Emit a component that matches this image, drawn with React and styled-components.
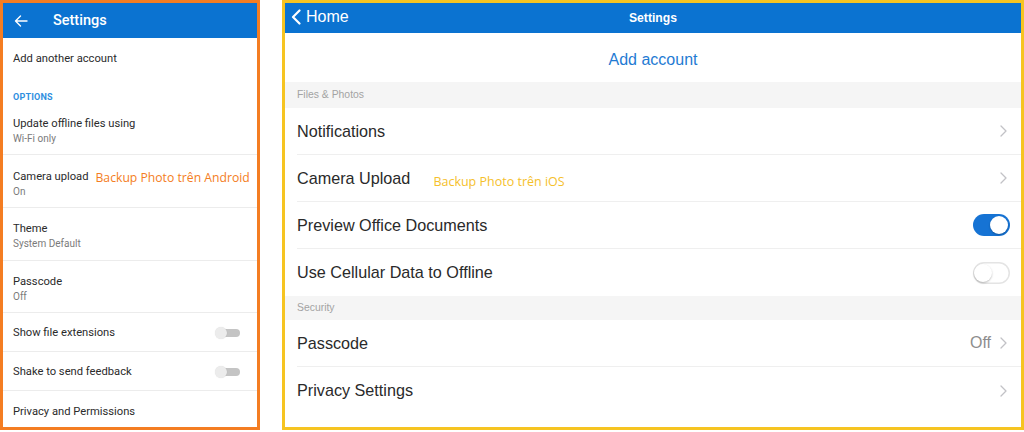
import React from "react";
import styled, { createGlobalStyle } from "styled-components";

const Global = createGlobalStyle`
  html, body { margin: 0; padding: 0; background: #fff; }
  * { box-sizing: border-box; }
`;

const Page = styled.div`
  width: 1024px;
  height: 432px;
  display: flex;
  align-items: flex-start;
  background: #fff;
  overflow: hidden;
`;

/* ---------- Android ---------- */
const AndroidPanel = styled.div`
  width: 260px;
  height: 430px;
  border: 3px solid #f47d22;
  display: flex;
  flex-direction: column;
  overflow: hidden;
  font-family: Roboto, "Noto Sans", sans-serif;
  background: #fff;
`;

const AndroidBar = styled.div`
  height: 35px;
  flex: none;
  background: #0b73d1;
  display: flex;
  align-items: center;
  padding-left: 11px;
  gap: 25px;
  color: #fff;
`;

const AndroidTitle = styled.div`
  font-size: 14.5px;
  font-weight: 500;
`;

const ARow = styled.div`
  flex: none;
  height: ${(p) => p.$h}px;
  padding: 0 17px 0 10px;
  display: flex;
  align-items: ${(p) => (p.$top ? "flex-start" : "center")};
  justify-content: space-between;
  padding-top: ${(p) => (p.$top ? "14px" : "2px")};
  border-bottom: ${(p) => (p.$line ? "1px solid #ececec" : "none")};
`;

const ATexts = styled.div`
  display: flex;
  flex-direction: column;
`;

const ATitleLine = styled.div`
  display: flex;
  align-items: baseline;
  white-space: nowrap;
  font-size: 11.2px;
  line-height: 14px;
  color: #2b2b2b;
`;

const ASub = styled.div`
  font-size: 10px;
  line-height: 12px;
  margin-top: 2px;
  color: #7a7a7a;
`;

const ASection = styled.div`
  flex: none;
  height: 25px;
  padding: 13px 10px 0;
  font-size: 9px;
  line-height: 12px;
  font-weight: 700;
  color: #2f8fe0;
  letter-spacing: 0.2px;
`;

const Note = styled.span`
  font-family: "Open Sans", "Noto Sans", sans-serif;
  font-size: ${(p) => p.$size}px;
  color: ${(p) => p.$color};
  margin-left: ${(p) => p.$gap}px;
  white-space: nowrap;
  position: relative;
  top: ${(p) => p.$drop}px;
`;

const ASwitch = styled.div`
  position: relative;
  width: 25px;
  height: 12px;
  &::before {
    content: "";
    position: absolute;
    left: 5px;
    right: 0;
    top: 2px;
    height: 8px;
    border-radius: 4px;
    background: #c4c4c4;
  }
  &::after {
    content: "";
    position: absolute;
    left: 0;
    top: 0;
    width: 12px;
    height: 12px;
    border-radius: 50%;
    background: #ececec;
    box-shadow: 0 0 1px rgba(0, 0, 0, 0.15);
  }
`;

/* ---------- iOS ---------- */
const IosPanel = styled.div`
  margin-left: 22px;
  width: 742px;
  height: 430px;
  border: 3px solid #f6c421;
  display: flex;
  flex-direction: column;
  overflow: hidden;
  font-family: "Liberation Sans", Arial, sans-serif;
  background: #fff;
`;

const IosBar = styled.div`
  flex: none;
  height: 30px;
  background: #0b73d1;
  color: #fff;
  display: grid;
  grid-template-columns: 1fr auto 1fr;
  align-items: center;
  padding: 0 6px;
`;

const BackLink = styled.div`
  display: flex;
  align-items: center;
  gap: 5px;
  font-size: 16px;
  padding-bottom: 2px;
`;

const IosTitle = styled.div`
  font-size: 12.2px;
  font-weight: 700;
  padding-bottom: 1px;
`;

const AddAccount = styled.div`
  flex: none;
  height: 49px;
  display: flex;
  align-items: center;
  justify-content: center;
  font-size: 16px;
  color: #1f7bd3;
  padding-top: 5px;
`;

const IosSection = styled.div`
  flex: none;
  height: ${(p) => p.$h}px;
  background: #f5f5f5;
  display: flex;
  align-items: center;
  padding-left: 12px;
  padding-bottom: 1px;
  font-size: 10.4px;
  color: #a3a3a3;
`;

const IRow = styled.div`
  flex: none;
  height: 47px;
  margin-left: 12px;
  padding-right: 11px;
  display: flex;
  align-items: center;
  justify-content: space-between;
  border-bottom: ${(p) => (p.$line ? "1px solid #efefef" : "none")};
`;

const ITitle = styled.div`
  display: flex;
  align-items: baseline;
  white-space: nowrap;
  font-size: 16.2px;
  color: #2a2a2a;
`;

const Trail = styled.div`
  display: flex;
  align-items: center;
  gap: 9px;
  font-size: 16px;
  color: #8d8d8d;
  padding-right: 3px;
`;

const ISwitch = styled.div`
  position: relative;
  width: 37px;
  height: 22px;
  border-radius: 11px;
  background: ${(p) => (p.$on ? "#1673d4" : "#fff")};
  box-shadow: ${(p) => (p.$on ? "none" : "inset 0 0 0 1.5px #e4e4e4")};
  &::after {
    content: "";
    position: absolute;
    top: 2px;
    left: ${(p) => (p.$on ? "17px" : "1px")};
    width: 18px;
    height: 18px;
    border-radius: 50%;
    background: #fff;
    box-shadow: 0 1px 2px rgba(0, 0, 0, 0.25);
  }
`;

const Chevron = () => (
  <svg width="7" height="12" viewBox="0 0 7 12" fill="none">
    <path d="M1 1l5 5-5 5" stroke="#c2c2c6" strokeWidth="1.3" strokeLinecap="round" strokeLinejoin="round" />
  </svg>
);

const BackArrow = () => (
  <svg width="14" height="12" viewBox="0 0 14 12" fill="none">
    <path d="M13 6H1.5M6.5 1L1.5 6l5 5" stroke="#fff" strokeWidth="1.4" strokeLinecap="round" strokeLinejoin="round" />
  </svg>
);

const BackChevron = () => (
  <svg width="10" height="16" viewBox="0 0 10 16" fill="none">
    <path d="M8.5 1.5L2 8l6.5 6.5" stroke="#fff" strokeWidth="2.2" strokeLinecap="round" strokeLinejoin="round" />
  </svg>
);

export default function App() {
  return (
    <>
      <Global />
      <Page>
        <AndroidPanel>
          <AndroidBar>
            <BackArrow />
            <AndroidTitle>Settings</AndroidTitle>
          </AndroidBar>
          <ARow $h={40}>
            <ATitleLine>Add another account</ATitleLine>
          </ARow>
          <ASection>OPTIONS</ASection>
          <ARow $h={52} $top $line>
            <ATexts>
              <ATitleLine>Update offline files using</ATitleLine>
              <ASub>Wi-Fi only</ASub>
            </ATexts>
          </ARow>
          <ARow $h={53} $top $line>
            <ATexts>
              <ATitleLine>
                Camera upload
                <Note $size={12.2} $color="#f47d22" $gap={7} $drop={2}>
                  Backup Photo trên Android
                </Note>
              </ATitleLine>
              <ASub>On</ASub>
            </ATexts>
          </ARow>
          <ARow $h={53} $top $line>
            <ATexts>
              <ATitleLine>Theme</ATitleLine>
              <ASub>System Default</ASub>
            </ATexts>
          </ARow>
          <ARow $h={52} $top $line>
            <ATexts>
              <ATitleLine>Passcode</ATitleLine>
              <ASub>Off</ASub>
            </ATexts>
          </ARow>
          <ARow $h={39} $line>
            <ATitleLine>Show file extensions</ATitleLine>
            <ASwitch />
          </ARow>
          <ARow $h={39} $line>
            <ATitleLine>Shake to send feedback</ATitleLine>
            <ASwitch />
          </ARow>
          <ARow $h={39}>
            <ATitleLine>Privacy and Permissions</ATitleLine>
          </ARow>
        </AndroidPanel>

        <IosPanel>
          <IosBar>
            <BackLink>
              <BackChevron />
              Home
            </BackLink>
            <IosTitle>Settings</IosTitle>
            <div />
          </IosBar>
          <AddAccount>Add account</AddAccount>
          <IosSection $h={26}>Files &amp; Photos</IosSection>
          <IRow $line>
            <ITitle>Notifications</ITitle>
            <Trail>
              <Chevron />
            </Trail>
          </IRow>
          <IRow $line>
            <ITitle>
              Camera Upload
              <Note $size={12.5} $color="#f5c02b" $gap={23} $drop={2}>
                Backup Photo trên iOS
              </Note>
            </ITitle>
            <Trail>
              <Chevron />
            </Trail>
          </IRow>
          <IRow $line>
            <ITitle>Preview Office Documents</ITitle>
            <ISwitch $on />
          </IRow>
          <IRow>
            <ITitle>Use Cellular Data to Offline</ITitle>
            <ISwitch />
          </IRow>
          <IosSection $h={24}>Security</IosSection>
          <IRow $line>
            <ITitle>Passcode</ITitle>
            <Trail>
              Off
              <Chevron />
            </Trail>
          </IRow>
          <IRow>
            <ITitle>Privacy Settings</ITitle>
            <Trail>
              <Chevron />
            </Trail>
          </IRow>
        </IosPanel>
      </Page>
    </>
  );
}
